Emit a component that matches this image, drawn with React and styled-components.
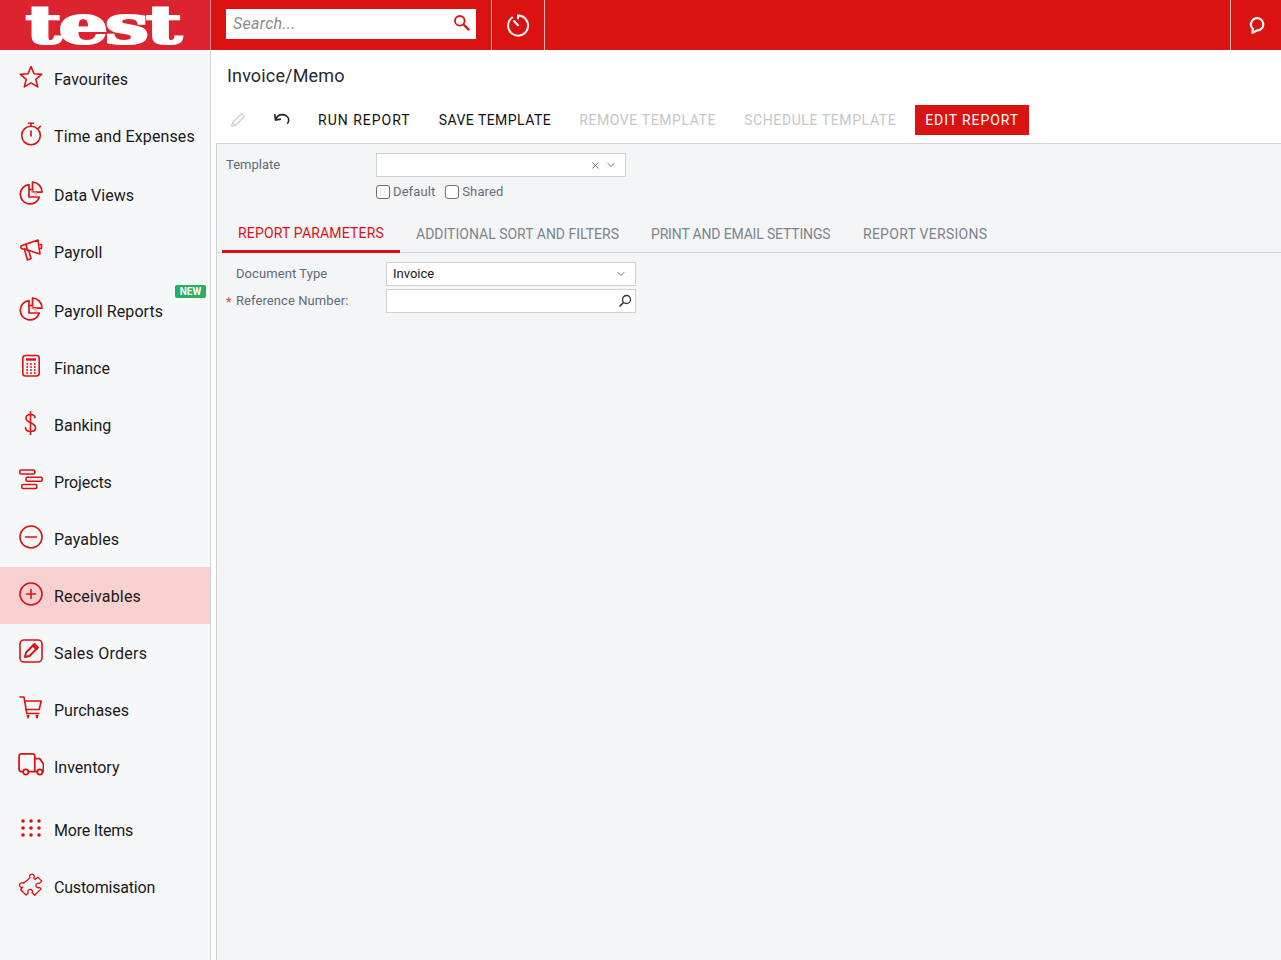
import React from "react";
import styled, { createGlobalStyle } from "styled-components";
import { X, ChevronDown } from "lucide-react";

const RED = "#db1212";

const GlobalStyle = createGlobalStyle`
  html, body { margin: 0; padding: 0; height: 100%; }
  body { font-family: Roboto, "Liberation Sans", sans-serif; background: #fff; overflow: hidden; }
  * { box-sizing: border-box; }
`;

const Line = ({ children, size = 24, sw = 1.6, stroke = RED }) => (
  <svg width={size} height={size} viewBox="0 0 24 24" fill="none" stroke={stroke} strokeWidth={sw} strokeLinecap="round" strokeLinejoin="round">
    {children}
  </svg>
);

const PieIcon = () => (
  <Line sw={1.7}>
    <path d="M10 3.600a9.700 9.700 0 1 0 10.300 12.400H10z" />
    <path d="M13.500 1a10 10 0 0 1 9.500 10.200h-9.500z" />
    <path d="M10 8.500h3.500v2.700H18l0 4.800" fill="#f4b5b5" stroke="none" />
    <path d="M10 8.500h3.500" />
  </Line>
);

const icons = {
  star: <Line><path d="M12 1.600l3 7.200 7.700.6-5.900 5 1.900 7.500-6.700-4-6.700 4 1.900-7.500-5.900-5 7.700-.6z" /></Line>,
  timer: (
    <Line>
      <circle cx="12" cy="13.500" r="9.300" />
      <path d="M12 9v5M9.500 1.200h5M12 1.200v3M19.500 6.200l1.800-1.800" />
    </Line>
  ),
  pie: <PieIcon />,
  horn: (
    <Line>
      <path d="M3 7.500l16-5.500 2 14-5-1.600-10-3.400H4a2.200 2.200 0 0 1-2.200-2.200c0-.7.4-1.300 1.200-1.300z" />
      <path d="M5.500 11.500l3 10.500 3.500-1.500-2.200-7.600M7 6.500l1.500 6M21 6.500h1.500v4H21" />
    </Line>
  ),
  calc: (
    <Line size={24}>
      <rect x="3.800" y="1.500" width="16.400" height="20.500" rx="2.800" />
      <path d="M7 5.500h10" strokeWidth="2.400" strokeLinecap="butt" />
      <path d="M7.500 10h9M7.500 13h9M7.500 16h9M7.500 19h9" strokeDasharray="1.400 2.400" strokeLinecap="butt" strokeWidth="1.800" />
    </Line>
  ),
  dollar: (
    <Line>
      <path d="M11.500 0.800v22.800" />
      <path d="M16 6.800C15.800 4.600 14 3.500 11.500 3.500 8.800 3.500 7 5 7 7.300c0 5.200 9.500 3.800 9.500 9.400 0 2.300-2 3.800-5 3.800-2.700 0-4.700-1.400-5-3.600" />
    </Line>
  ),
  gantt: (
    <Line>
      <rect x="0.800" y="2" width="15" height="4" rx="1.200" />
      <rect x="7" y="9.200" width="16.200" height="4" rx="1.200" />
      <rect x="2.800" y="16.500" width="15" height="4" rx="1.200" />
    </Line>
  ),
  minus: (
    <Line>
      <circle cx="12" cy="12" r="11" />
      <path d="M6.500 12h11" />
    </Line>
  ),
  plus: (
    <Line>
      <circle cx="12" cy="12" r="11" />
      <path d="M7.500 12h9M12 7.500v9" />
    </Line>
  ),
  edit: (
    <Line>
      <rect x="1" y="1" width="22" height="22" rx="4" />
      <path d="M6 18l1-4.500L15.500 5l3.500 3.500-8.500 8.500z" strokeWidth="1.900" />
      <path d="M14 6.500l3.500 3.500" strokeWidth="2.400" />
    </Line>
  ),
  cart: (
    <Line>
      <path d="M1 1h4l2.800 16.500h12" />
      <path d="M5.800 5h16.400l-2 8.500H7.300" />
      <path d="M9 20.500v1M18 20.500v1M8.500 19.800h1M17.500 19.800h1" strokeWidth="2" />
    </Line>
  ),
  truck: (
    <Line size={27} sw={1.600}>
      <path d="M4.500 18.500H3A2.200 2.200 0 0 1 1 16.300V4.300A2.200 2.200 0 0 1 3.200 2.200H13.500A2 2 0 0 1 15.500 4.200V18.500H10" />
      <path d="M15.500 6.500h4.500l3.500 5v7h-1M18 18.500h-2.500" />
      <circle cx="7.200" cy="19" r="2.400" />
      <circle cx="20.200" cy="19" r="2.400" />
    </Line>
  ),
  dots: (
    <svg width="24" height="24" viewBox="0 0 24 24" fill={RED}>
      {[5, 12, 19].map((y) =>
        [4, 12, 20].map((x) => <circle key={`${x}-${y}`} cx={x} cy={y} r="1.800" />)
      )}
    </svg>
  ),
  puzzle: (
    <Line sw={1.300}>
      <path d="M8.500 7l2.400-2.400c-.9-1.800.5-3.700 2.100-3.500 1.900.2 2.800 2.200 1.700 3.800l1.600 1.600 2.500-2.400 4 4-2.300 2.300c-1.800-.9-3.800.5-3.600 2.200.2 1.700 2.100 2.700 3.700 1.800l1.500 1.500-6.500 6.400-2.400-2.400c.9-1.800-.4-3.800-2.200-3.600-1.800.2-2.700 2.100-1.800 3.700L7 22l-5.500-5.500 2.400-2.400c-1.700.9-3.500-.5-3.300-2.200.2-1.800 2.200-2.700 3.800-1.700z" />
    </Line>
  ),
};

const navItems = [
  { label: "Favourites", icon: "star" },
  { label: "Time and Expenses", icon: "timer", track: 0.12 },
  { label: "Data Views", icon: "pie", gap: 2 },
  { label: "Payroll", icon: "horn" },
  { label: "Payroll Reports", icon: "pie", gap: 2, isNew: true, track: 0.07 },
  { label: "Finance", icon: "calc" },
  { label: "Banking", icon: "dollar" },
  { label: "Projects", icon: "gantt", track: -0.12 },
  { label: "Payables", icon: "minus", track: 0.1 },
  { label: "Receivables", icon: "plus", active: true, track: 0.18 },
  { label: "Sales Orders", icon: "edit", track: 0.25 },
  { label: "Purchases", icon: "cart" },
  { label: "Inventory", icon: "truck" },
  { label: "More Items", icon: "dots", gap: 6, track: -0.2 },
  { label: "Customisation", icon: "puzzle", track: -0.2 },
];

const tools = [
  { label: "RUN REPORT", track: 1 },
  { label: "SAVE TEMPLATE", track: 0.46 },
  { label: "REMOVE TEMPLATE", track: 0.6, disabled: true },
  { label: "SCHEDULE TEMPLATE", track: 0.6, disabled: true },
];

const tabs = [
  { label: "REPORT PARAMETERS", track: 0.17, width: 178 },
  { label: "ADDITIONAL SORT AND FILTERS", track: 0, width: 235 },
  { label: "PRINT AND EMAIL SETTINGS", track: -0.17, width: 212 },
  { label: "REPORT VERSIONS", track: 0.27, width: 156 },
];

export default function App() {
  return (
    <Page>
      <GlobalStyle />
      <TopBar>
        <LogoCell>
          <LogoText>test</LogoText>
        </LogoCell>
        <SearchCell>
          <SearchBox>
            <SearchHint>Search...</SearchHint>
            <svg width="18" height="18" viewBox="0 0 18 18" fill="none" stroke={RED} strokeWidth="1.800">
              <circle cx="6.800" cy="6.800" r="4.800" />
              <path d="M10.500 10.500L16.200 16.200" strokeWidth="2.400" />
            </svg>
          </SearchBox>
        </SearchCell>
        <BarButton>
          <svg width="24" height="24" viewBox="0 0 24 24" fill="none" stroke="#fff" strokeWidth="2" strokeLinecap="round">
            <path d="M6.200 4.500a10 10 0 1 0 5.800-1.900v3" />
            <path d="M8 8l4 4.200" />
          </svg>
        </BarButton>
        <BarSpacer />
        <BarButton $wide>
          <svg width="18" height="18" viewBox="0 0 18 18" fill="none" stroke="#fff" strokeWidth="2.200" strokeLinejoin="round">
            <path d="M4.800 12.800A6.200 6.200 0 1 1 9 14.500l-4.500 2.200z" />
          </svg>
        </BarButton>
      </TopBar>

      <Body>
        <Sidebar>
          {navItems.map((item) => (
            <NavItem key={item.label} $active={item.active} $gap={item.gap}>
              <NavIcon>{icons[item.icon]}</NavIcon>
              <NavLabel $track={item.track}>{item.label}</NavLabel>
              {item.isNew && <NewBadge>NEW</NewBadge>}
            </NavItem>
          ))}
        </Sidebar>

        <Main>
          <Title>Invoice/Memo</Title>
          <Toolbar>
            <ToolIcon>
              <svg width="16" height="16" viewBox="0 0 16 16" fill="none" stroke="#ccc" strokeWidth="1.100" strokeLinejoin="round">
                <path d="M1.500 14.500l1-4L11.500 1.500l3 3-9 9z" />
                <path d="M2.500 10.500l3 3" />
              </svg>
            </ToolIcon>
            <ToolIcon>
              <svg width="18" height="18" viewBox="0 0 16 16" fill="none" stroke="#222" strokeWidth="1.400">
                <path d="M2.500 7.500c1-2.800 3.300-4.400 6-4.300 3 .1 5.500 2.200 5.500 4.800 0 1.300-.5 2.500-1.300 3.300" />
                <path d="M1.500 2.800L2.300 8l4.700-.8" />
              </svg>
            </ToolIcon>
            {tools.map((t) => (
              <ToolButton key={t.label} $track={t.track} $disabled={t.disabled}>
                {t.label}
              </ToolButton>
            ))}
            <PrimaryButton>EDIT REPORT</PrimaryButton>
          </Toolbar>

          <Panel>
            <TemplateRow>
              <FieldLabel $width={150}>Template</FieldLabel>
              <Select $width={250}>
                <SelectIcons>
                  <X size={11} color="#555" strokeWidth={1.800} />
                  <ChevronDown size={12} color="#555" strokeWidth={1.800} />
                </SelectIcons>
              </Select>
            </TemplateRow>
            <CheckRow>
              <CheckItem>
                <Check />
                Default
              </CheckItem>
              <CheckItem>
                <Check />
                Shared
              </CheckItem>
            </CheckRow>

            <TabBar>
              {tabs.map((t, i) => (
                <Tab key={t.label} $active={i === 0} $track={t.track} $width={t.width}>
                  {t.label}
                </Tab>
              ))}
            </TabBar>

            <ParamForm>
              <ParamRow>
                <ParamLabel>Document Type</ParamLabel>
                <Select $width={250}>
                  <SelectValue>Invoice</SelectValue>
                  <SelectIcons>
                    <ChevronDown size={12} color="#555" strokeWidth={1.800} />
                  </SelectIcons>
                </Select>
              </ParamRow>
              <ParamRow>
                <ParamLabel>
                  <Required>*</Required>
                  Reference Number:
                </ParamLabel>
                <Select $width={250} $tight>
                  <SelectIcons>
                    <svg width="14" height="14" viewBox="0 0 14 14" fill="none" stroke="#333" strokeWidth="1.300">
                      <circle cx="8.500" cy="5.500" r="4" />
                      <path d="M5.500 8.500L1.500 12.500" strokeWidth="1.700" />
                    </svg>
                  </SelectIcons>
                </Select>
              </ParamRow>
            </ParamForm>
          </Panel>
        </Main>
      </Body>
    </Page>
  );
}

const Page = styled.div`
  display: flex;
  flex-direction: column;
  height: 960px;
  width: 1281px;
`;

const TopBar = styled.header`
  display: flex;
  height: 50px;
  flex: none;
  background: ${RED};
`;

const LogoCell = styled.div`
  width: 211px;
  flex: none;
  display: flex;
  justify-content: center;
  align-items: center;
  padding-right: 5px;
  background: #dc2430;
  border-right: 1px solid #e9808a;
`;

const LogoText = styled.span`
  font-family: "DejaVu Serif", serif;
  font-weight: 700;
  font-size: 52px;
  line-height: 50px;
  letter-spacing: -2px;
  color: #fff;
  -webkit-text-stroke: 2.200px #fff;
  transform: scaleX(1.500);
`;

const SearchCell = styled.div`
  width: 280px;
  flex: none;
  display: flex;
  align-items: flex-start;
  padding: 9px 0 0 15px;
`;

const SearchBox = styled.div`
  width: 250px;
  height: 30px;
  background: #fff;
  display: flex;
  align-items: center;
  justify-content: space-between;
  padding: 0 5px 2px 7px;
`;

const SearchHint = styled.span`
  font-style: italic;
  font-size: 16px;
  letter-spacing: 0.3px;
  color: #8a8a8a;
`;

const BarButton = styled.div`
  width: ${(p) => (p.$wide ? "51px" : "54px")};
  flex: none;
  display: flex;
  align-items: center;
  justify-content: center;
  padding-left: ${(p) => (p.$wide ? "2px" : "0")};
  border-left: 1px solid #f3b7b7;
  border-right: ${(p) => (p.$wide ? "none" : "1px solid #f3b7b7")};
`;

const BarSpacer = styled.div`
  flex: 1;
`;

const Body = styled.div`
  display: flex;
  flex: 1;
  min-height: 0;
`;

const Sidebar = styled.nav`
  width: 211px;
  flex: none;
  background: #f5f7f9;
  border-right: 1px solid #d2d4d8;
`;

const NavItem = styled.div`
  position: relative;
  height: 57px;
  margin-top: ${(p) => p.$gap || 0}px;
  display: flex;
  align-items: center;
  padding-left: 18px;
  background: ${(p) => (p.$active ? "#f8d0d0" : "transparent")};
`;

const NavIcon = styled.span`
  width: 26px;
  height: 26px;
  margin-right: 10px;
  margin-top: -4px;
  display: flex;
  align-items: center;
  justify-content: center;
  flex: none;
`;

const NavLabel = styled.span`
  font-size: 16px;
  margin-top: 2px;
  letter-spacing: ${(p) => p.$track || 0}px;
  color: #1a1a1a;
`;

const NewBadge = styled.span`
  position: absolute;
  right: 4px;
  top: 3px;
  height: 13px;
  width: 31px;
  border-radius: 2px;
  background: #27ae60;
  color: #fff;
  font-size: 10px;
  font-weight: 700;
  line-height: 13px;
  text-align: center;
`;

const Main = styled.main`
  flex: 1;
  min-width: 0;
  display: flex;
  flex-direction: column;
  padding-left: 5px;
`;

const Title = styled.h1`
  margin: 0;
  height: 55px;
  padding: 14px 0 0 11px;
  font-size: 18px;
  line-height: 24px;
  letter-spacing: 0.15px;
  font-weight: 400;
  color: #1f2a33;
`;

const Toolbar = styled.div`
  height: 38px;
  display: flex;
  align-items: flex-start;
`;

const ToolIcon = styled.span`
  width: 44px;
  height: 30px;
  flex: none;
  display: flex;
  align-items: center;
  justify-content: center;
`;

const ToolButton = styled.span`
  height: 30px;
  line-height: 30px;
  margin-right: 28px;
  font-size: 14px;
  letter-spacing: ${(p) => p.$track}px;
  color: ${(p) => (p.$disabled ? "#c6c6c6" : "#111")};
  white-space: nowrap;
  &:nth-child(3) {
    margin-left: 14px;
  }
`;

const PrimaryButton = styled.span`
  height: 30px;
  line-height: 30px;
  padding: 0 10px;
  margin-left: -9px;
  background: ${RED};
  color: #fff;
  font-size: 14px;
  letter-spacing: 0.9px;
  white-space: nowrap;
`;

const Panel = styled.section`
  flex: 1;
  background: #f4f5f7;
  border-top: 1px solid #d2d4d8;
  border-left: 1px solid #d2d4d8;
  padding-top: 9px;
`;

const TemplateRow = styled.div`
  display: flex;
  align-items: center;
  padding-left: 9px;
`;

const FieldLabel = styled.label`
  width: ${(p) => p.$width}px;
  font-size: 13px;
  padding-bottom: 2px;
  color: #5f6b77;
  flex: none;
`;

const Select = styled.div`
  position: relative;
  width: ${(p) => p.$width}px;
  height: 24px;
  background: #fff;
  border: 1px solid #ced1d6;
  display: flex;
  align-items: center;
  justify-content: space-between;
  padding: 0 ${(p) => (p.$tight ? "2px" : "7px")} 0 6px;
`;

const SelectValue = styled.span`
  font-size: 13px;
  padding-bottom: 2px;
  color: #1a1a1a;
`;

const SelectIcons = styled.span`
  margin-left: auto;
  display: flex;
  align-items: center;
  gap: 4px;
  padding-right: 1px;
`;

const CheckRow = styled.div`
  display: flex;
  gap: 10px;
  padding: 8px 0 0 159px;
`;

const CheckItem = styled.label`
  display: flex;
  align-items: center;
  gap: 3px;
  font-size: 13px;
  line-height: 14px;
  letter-spacing: 0.1px;
  color: #666d75;
`;

const Check = styled.span`
  width: 14px;
  height: 14px;
  border: 1px solid #6e6e6e;
  border-radius: 3px;
  background: #fff;
  flex: none;
`;

const TabBar = styled.div`
  display: flex;
  height: 36px;
  margin-top: 18px;
  padding-left: 5px;
  border-bottom: 1px solid #d2d4d8;
`;

const Tab = styled.div`
  width: ${(p) => p.$width}px;
  padding-left: 16px;
  height: 36px;
  line-height: ${(p) => (p.$active ? "33px" : "35px")};
  font-size: 14px;
  letter-spacing: ${(p) => p.$track}px;
  white-space: nowrap;
  color: ${(p) => (p.$active ? RED : "#7c848c")};
  border-bottom: ${(p) => (p.$active ? `3px solid ${RED}` : "none")};
`;

const ParamForm = styled.div`
  display: flex;
  flex-direction: column;
  gap: 3px;
  padding: 9px 0 0 9px;
`;

const ParamRow = styled.div`
  display: flex;
  align-items: center;
`;

const ParamLabel = styled.label`
  position: relative;
  width: 160px;
  padding: 0 0 2px 10px;
  flex: none;
  font-size: 13px;
  letter-spacing: 0.08px;
  color: #5f6b77;
`;

const Required = styled.span`
  position: absolute;
  left: 0;
  top: 1px;
  color: #e0474c;
`;
